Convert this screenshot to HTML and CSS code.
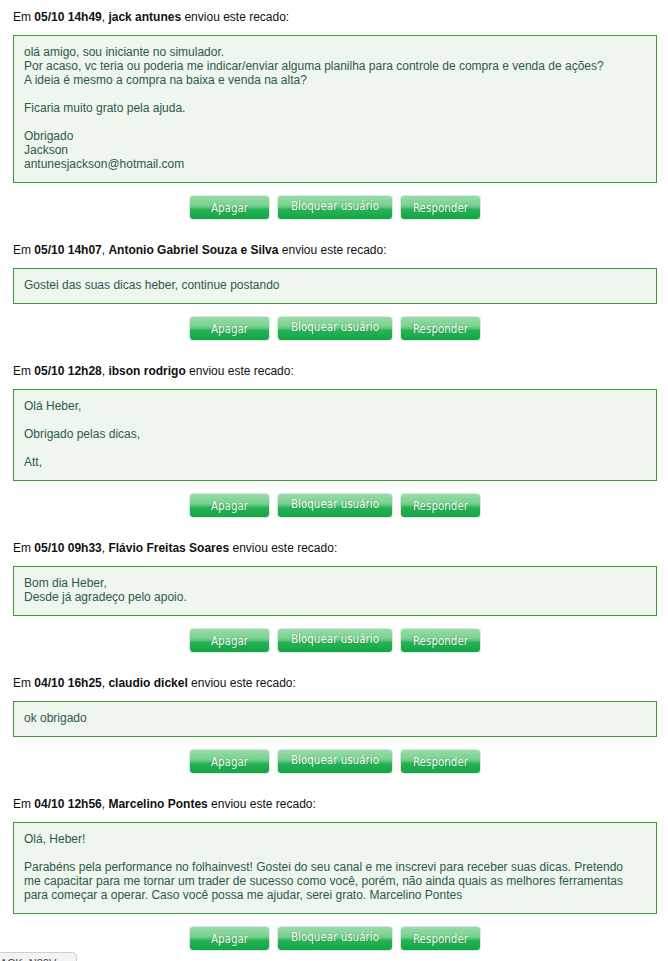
FILE: index.html
```html
<!DOCTYPE html>
<html lang="pt-BR">
<head>
<meta charset="utf-8">
<title>Recados</title>
<link rel="stylesheet" href="styles.css">
</head>
<body>
<div class="page">

  <div class="entry">
    <div class="head">Em <b>05/10 14h49</b>, <b>jack antunes</b> enviou este recado:</div>
    <div class="msg">olá amigo, sou iniciante no simulador.<br>Por acaso, vc teria ou poderia me indicar/enviar alguma planilha para controle de compra e venda de ações?<br>A ideia é mesmo a compra na baixa e venda na alta?<br><br>Ficaria muito grato pela ajuda.<br><br>Obrigado<br>Jackson<br>antunesjackson@hotmail.com</div>
    <div class="actions"><span class="btn sm">Apagar</span><span class="btn lg">Bloquear usuário</span><span class="btn sm">Responder</span></div>
  </div>

  <div class="entry">
    <div class="head">Em <b>05/10 14h07</b>, <b>Antonio Gabriel Souza e Silva</b> enviou este recado:</div>
    <div class="msg">Gostei das suas dicas heber, continue postando</div>
    <div class="actions"><span class="btn sm">Apagar</span><span class="btn lg">Bloquear usuário</span><span class="btn sm">Responder</span></div>
  </div>

  <div class="entry">
    <div class="head">Em <b>05/10 12h28</b>, <b>ibson rodrigo</b> enviou este recado:</div>
    <div class="msg">Olá Heber,<br><br>Obrigado pelas dicas,<br><br>Att,</div>
    <div class="actions"><span class="btn sm">Apagar</span><span class="btn lg">Bloquear usuário</span><span class="btn sm">Responder</span></div>
  </div>

  <div class="entry">
    <div class="head">Em <b>05/10 09h33</b>, <b>Flávio Freitas Soares</b> enviou este recado:</div>
    <div class="msg">Bom dia Heber,<br>Desde já agradeço pelo apoio.</div>
    <div class="actions"><span class="btn sm">Apagar</span><span class="btn lg">Bloquear usuário</span><span class="btn sm">Responder</span></div>
  </div>

  <div class="entry">
    <div class="head">Em <b>04/10 16h25</b>, <b>claudio dickel</b> enviou este recado:</div>
    <div class="msg">ok obrigado</div>
    <div class="actions"><span class="btn sm">Apagar</span><span class="btn lg">Bloquear usuário</span><span class="btn sm">Responder</span></div>
  </div>

  <div class="entry">
    <div class="head">Em <b>04/10 12h56</b>, <b>Marcelino Pontes</b> enviou este recado:</div>
    <div class="msg">Olá, Heber!<br><br>Parabéns pela performance no folhainvest! Gostei do seu canal e me inscrevi para receber suas dicas. Pretendo me capacitar para me tornar um trader de sucesso como você, porém, não ainda quais as melhores ferramentas para começar a operar. Caso você possa me ajudar, serei grato. Marcelino Pontes</div>
    <div class="actions"><span class="btn sm">Apagar</span><span class="btn lg">Bloquear usuário</span><span class="btn sm">Responder</span></div>
  </div>

</div>
<div class="chat-tab">ACK_N80V</div>
</body>
</html>
```

FILE: styles.css
```css
html, body {
  margin: 0;
  padding: 0;
  background: #ffffff;
}

body {
  font-family: "Liberation Sans", Arial, sans-serif;
  font-size: 12px;
  color: #111;
}

.page {
  padding: 8px 11px 0 13px;
}

.entry + .entry {
  margin-top: 21px;
}

.head {
  line-height: 18px;
  color: #111;
}

.head b {
  font-weight: bold;
}

.msg {
  margin-top: 9px;
  border: 1px solid #3b9a36;
  background: #eef6ee;
  padding: 9px 18px 11px 10px;
  line-height: 14px;
  color: #2d5a48;
}

.actions {
  margin-top: 12px;
  display: flex;
  justify-content: center;
  gap: 7px;
}

.btn {
  box-sizing: border-box;
  height: 25px;
  border: 1px solid #dfe6df;
  border-radius: 4px;
  background: linear-gradient(to bottom, #98dba8 0%, #7ad290 40%, #58c476 50%, #28b255 58%, #10a646 100%);
  color: #ffffff;
  font-family: "DejaVu Sans Condensed", "DejaVu Sans", sans-serif;
  font-size: 11.5px;
  line-height: 23px;
  text-align: center;
  text-shadow: 0 0 1px rgba(0, 70, 20, 0.6);
  display: flex;
  align-items: center;
  justify-content: center;
  padding-top: 1px;
}

.btn.sm {
  width: 81px;
}

.btn.lg {
  width: 116px;
  padding-top: 0;
  padding-bottom: 2px;
}

.chat-tab {
  position: fixed;
  left: -1px;
  top: 952px;
  width: 78px;
  height: 24px;
  box-sizing: border-box;
  border: 1px solid #cfcfcf;
  border-radius: 0 4px 0 0;
  background: #f3f3f3;
  font-family: "Liberation Sans", Arial, sans-serif;
  font-size: 11px;
  color: #444;
  padding: 4px 0 0 0;
  line-height: 13px;
}
```
